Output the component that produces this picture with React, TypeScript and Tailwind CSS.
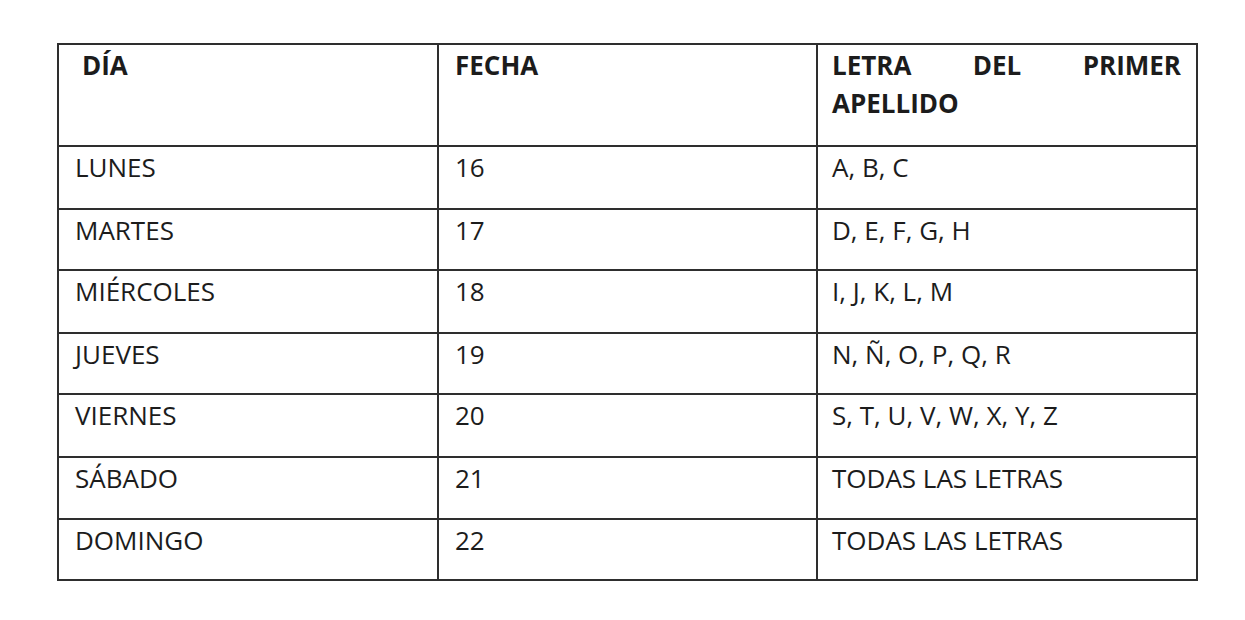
import React from "react";

const rows: [string, string, string, number][] = [
  ["LUNES", "16", "A, B, C", 63],
  ["MARTES", "17", "D, E, F, G, H", 61],
  ["MIÉRCOLES", "18", "I, J, K, L, M", 63],
  ["JUEVES", "19", "N, Ñ, O, P, Q, R", 61],
  ["VIERNES", "20", "S, T, U, V, W, X, Y, Z", 63],
  ["SÁBADO", "21", "TODAS LAS LETRAS", 62],
  ["DOMINGO", "22", "TODAS LAS LETRAS", 61],
];

export default function App() {
  return (
    <div className="w-[1245px] h-[620px] bg-white pt-[43px] pl-[57px]" style={{ fontFamily: '"Open Sans", "Noto Sans", sans-serif' }}>
      <table className="border-collapse table-fixed text-[#1c1c1c]">
        <colgroup>
          <col className="w-[380px]" />
          <col className="w-[379px]" />
          <col className="w-[380px]" />
        </colgroup>
        <tbody>
          <tr className="h-[102px]">
            <td className="border-2 border-[#2e2e2e] align-top pt-[1px] pl-[23px] text-[26px] font-bold leading-[38px]">DÍA</td>
            <td className="border-2 border-[#2e2e2e] align-top pt-[1px] pl-[16px] text-[26px] font-bold leading-[38px]">FECHA</td>
            <td className="border-2 border-[#2e2e2e] align-top pt-[1px] pl-[14px] pr-[15px] text-[26px] font-bold leading-[38px]">
              <div className="flex justify-between">
                <span>LETRA</span>
                <span>DEL</span>
                <span>PRIMER</span>
              </div>
              <div>APELLIDO</div>
            </td>
          </tr>
          {rows.map(([d, f, l, h]) => (
            <tr key={d} style={{ height: h }}>
              <td className="border-2 border-[#2e2e2e] align-top pt-[2px] pl-[16px] text-[26px] font-medium leading-[36px]">{d}</td>
              <td className="border-2 border-[#2e2e2e] align-top pt-[2px] pl-[16px] text-[26px] font-medium leading-[36px]">{f}</td>
              <td className="border-2 border-[#2e2e2e] align-top pt-[2px] pl-[14px] text-[26px] font-medium leading-[36px]">{l}</td>
            </tr>
          ))}
        </tbody>
      </table>
    </div>
  );
}
